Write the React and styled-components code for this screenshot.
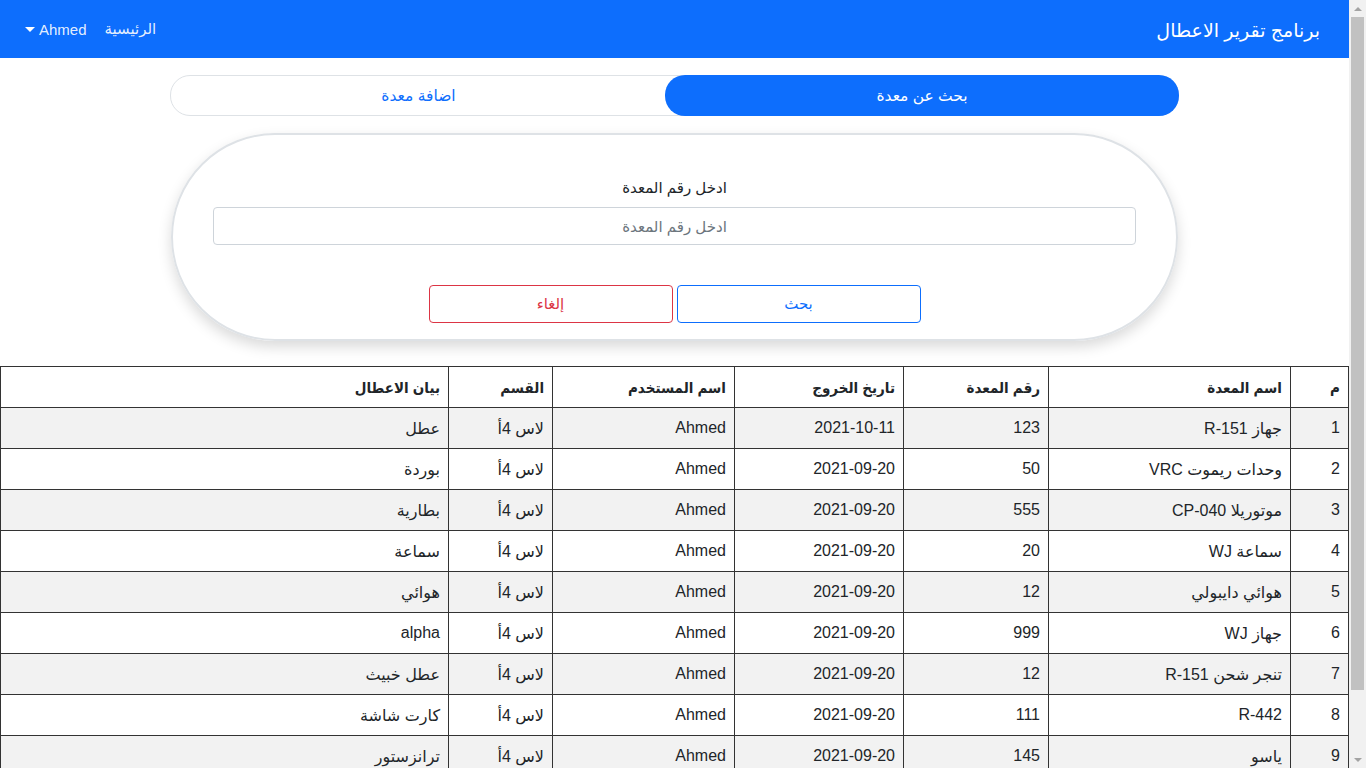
import styled, { createGlobalStyle } from 'styled-components';

const GlobalStyle = createGlobalStyle`
    * { box-sizing: border-box; }
    body {
        margin: 0 17px 0 0;
        font-family: "Liberation Sans", "DejaVu Sans", sans-serif;
        font-size: 16px;
        color: #212529;
        background: #fff;
    }
`;

const Page = styled.div`
    direction: rtl;
    padding-bottom: 62px;
`;

/* the browser's own scrollbar, drawn since the screenshot shows it */
const ScrollTrack = styled.div`
    position: fixed;
    top: 0;
    right: 0;
    width: 17px;
    height: 100vh;
    background: #f1f1f1;
    display: flex;
    flex-direction: column;
    align-items: center;
`;

const ScrollArrow = styled.div`
    height: 17px;
    display: flex;
    align-items: center;
    justify-content: center;
    margin-top: ${p => (p.$down ? 'auto' : '0')};

    &::before {
        content: '';
        border-left: 4px solid transparent;
        border-right: 4px solid transparent;
        ${p => (p.$down ? 'border-top: 4px solid #a3a3a3;' : 'border-bottom: 4px solid #a3a3a3;')}
    }
`;

const ScrollThumb = styled.div`
    width: 13px;
    height: 673px;
    background: #c1c1c1;
`;

const Navbar = styled.nav`
    height: 58px;
    background: #0d6efd;
    display: flex;
    align-items: center;
    padding: 0 29px 0 25px;
`;

const Brand = styled.a`
    color: #fff;
    font-size: 19px;
    text-decoration: none;
    padding-top: 2px;
`;

const NavLinks = styled.div`
    margin-right: auto;
    display: flex;
    align-items: center;
    gap: 18px;
`;

const NavLink = styled.a`
    color: rgba(255, 255, 255, 0.9);
    font-size: 15px;
    display: flex;
    align-items: center;
    gap: 4px;
`;

const Caret = styled.span`
    width: 0;
    height: 0;
    border-top: 5px solid #fff;
    border-left: 5px solid transparent;
    border-right: 5px solid transparent;
`;

const Tabs = styled.div`
    width: 1009px;
    margin: 17px auto 0;
    display: flex;
    border: 1px solid #dee2e6;
    border-radius: 20px;
    height: 41px;
`;

const Tab = styled.button`
    flex: 1 1 auto;
    border: none;
    border-radius: 20px;
    font-family: inherit;
    font-size: 15.5px;
    background: ${p => (p.$active ? '#0d6efd' : 'transparent')};
    color: ${p => (p.$active ? '#fff' : '#0d6efd')};
    margin: -1px;
    cursor: pointer;
`;

const Card = styled.div`
    width: 1007px;
    margin: 17px auto 0;
    border: 2px solid #dee2e6;
    border-radius: 104px;
    box-shadow: 0 6px 14px rgba(0, 0, 0, 0.15);
    padding: 44px 40px 16px;
    display: flex;
    flex-direction: column;
    align-items: center;
`;

const Label = styled.label`
    font-size: 15px;
    margin-bottom: 10px;
`;

const Input = styled.input`
    width: 100%;
    height: 38px;
    border: 1px solid #ced4da;
    border-radius: 4px;
    font-family: inherit;
    font-size: 15px;
    text-align: center;
    direction: rtl;
    &::placeholder { color: #6c757d; }
`;

const Actions = styled.div`
    display: flex;
    gap: 4px;
    margin-top: 40px;
`;

const OutlineButton = styled.button`
    width: 244px;
    height: 38px;
    background: #fff;
    border: 1px solid ${p => p.$color};
    color: ${p => p.$color};
    border-radius: 4px;
    font-family: inherit;
    font-size: 15px;
`;

const Table = styled.table`
    margin-top: 25px;
    width: 100%;
    border-collapse: collapse;
    border: 1px solid #333;
    font-size: 16px;

    th, td {
        border: 1px solid #333;
        padding: 0 8px;
        height: 41px;
        text-align: right;
    }
    th {
        font-family: "Liberation Sans", "DejaVu Sans Condensed", sans-serif;
        font-weight: bold;
        font-size: 15px;
        padding-top: 2px;
    }
    tbody tr:nth-child(odd) { background: #f2f2f2; }
`;

const widths = [58, 242, 145, 169, 182, 104];

const rows = [
    ['1', 'جهاز R-151', '123', '2021-10-11', 'Ahmed', 'لاس 4أ', 'عطل'],
    ['2', 'وحدات ريموت VRC', '50', '2021-09-20', 'Ahmed', 'لاس 4أ', 'بوردة'],
    ['3', 'موتوريلا CP-040', '555', '2021-09-20', 'Ahmed', 'لاس 4أ', 'بطارية'],
    ['4', 'سماعة WJ', '20', '2021-09-20', 'Ahmed', 'لاس 4أ', 'سماعة'],
    ['5', 'هوائي دايبولي', '12', '2021-09-20', 'Ahmed', 'لاس 4أ', 'هوائي'],
    ['6', 'جهاز WJ', '999', '2021-09-20', 'Ahmed', 'لاس 4أ', 'alpha'],
    ['7', 'تنجر شحن R-151', '12', '2021-09-20', 'Ahmed', 'لاس 4أ', 'عطل خبيث'],
    ['8', 'R-442', '111', '2021-09-20', 'Ahmed', 'لاس 4أ', 'كارت شاشة'],
    ['9', 'ياسو', '145', '2021-09-20', 'Ahmed', 'لاس 4أ', 'ترانزستور'],
];

const headers = ['م', 'اسم المعدة', 'رقم المعدة', 'تاريخ الخروج', 'اسم المستخدم', 'القسم', 'بيان الاعطال'];

export default function App() {
    return (
        <Page>
            <GlobalStyle />
            <Navbar>
                <Brand>برنامج تقرير الاعطال</Brand>
                <NavLinks>
                    <NavLink>الرئيسية</NavLink>
                    <NavLink>Ahmed <Caret /></NavLink>
                </NavLinks>
            </Navbar>

            <Tabs>
                <Tab $active>بحث عن معدة</Tab>
                <Tab>اضافة معدة</Tab>
            </Tabs>

            <Card>
                <Label>ادخل رقم المعدة</Label>
                <Input placeholder="ادخل رقم المعدة" />
                <Actions>
                    <OutlineButton $color="#0d6efd">بحث</OutlineButton>
                    <OutlineButton $color="#dc3545">إلغاء</OutlineButton>
                </Actions>
            </Card>

            <Table>
                <thead>
                    <tr>
                        {headers.map((h, i) => (
                            <th key={h} style={widths[i] ? { width: widths[i] } : undefined}>{h}</th>
                        ))}
                    </tr>
                </thead>
                <tbody>
                    {rows.map(r => (
                        <tr key={r[0]}>
                            {r.map((c, i) => <td key={i}>{c}</td>)}
                        </tr>
                    ))}
                </tbody>
            </Table>

            <ScrollTrack>
                <ScrollArrow />
                <ScrollThumb />
                <ScrollArrow $down />
            </ScrollTrack>
        </Page>
    );
}
